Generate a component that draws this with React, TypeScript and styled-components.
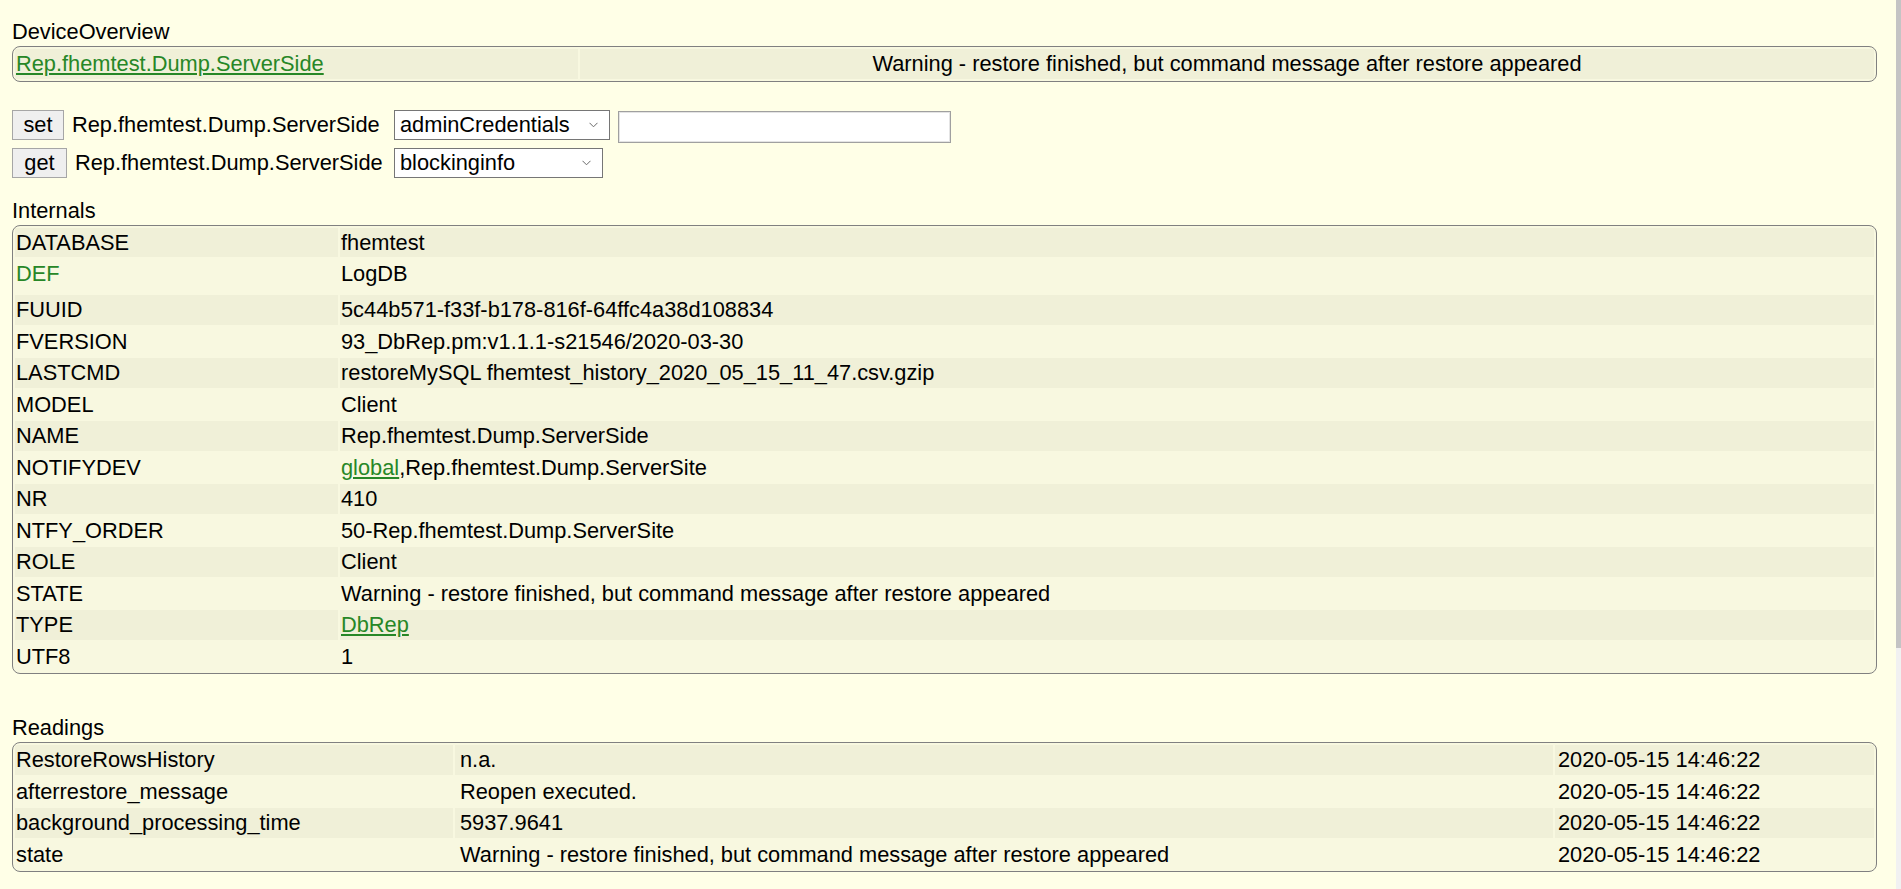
import React from "react";
import styled, { createGlobalStyle } from "styled-components";

const GlobalStyle = createGlobalStyle`
  body {
    margin: 0;
    background: #ffffe7;
    color: #000;
    font-family: "Liberation Sans", Arial, sans-serif;
    font-size: 21.8px;
  }
`;

const Page = styled.div`
  box-sizing: border-box;
  padding: 19px 24px 0 12px;
`;

/* thin browser scrollbar strip lying over the right edge of the page */
const ScrollStrip = styled.div`
  position: fixed;
  top: 0;
  right: 0;
  width: 5px;
  height: 100vh;
  display: flex;
  flex-direction: column;
  background: #f1f1f1;
`;

const ScrollThumb = styled.div`
  height: 648px;
  background: #c4c4c4;
`;

const Section = styled.section<{ $gap?: number }>`
  margin-top: ${(p) => p.$gap ?? 0}px;
`;

const Title = styled.div`
  line-height: 25px;
  margin-bottom: 2px;
`;

const Block = styled.table`
  width: 100%;
  border-collapse: separate;
  border-spacing: 2px;
  background: #f8f8e0;
  border: 1px solid #808080;
  border-radius: 8px;
  font-size: 21.8px;
`;

const Row = styled.tr<{ $odd: boolean }>`
  background: ${(p) => (p.$odd ? "#f0f0d8" : "transparent")};
`;

const Cell = styled.td<{
  $width?: number;
  $center?: boolean;
  $padLeft?: number;
  $tall?: boolean;
}>`
  padding: 2px 1px ${(p) => (p.$tall ? 6.5 : 2)}px ${(p) => p.$padLeft ?? 1}px;
  line-height: 25.5px;
  vertical-align: top;
  white-space: nowrap;
  text-align: ${(p) => (p.$center ? "center" : "left")};
  ${(p) => (p.$width ? `width: ${p.$width}px;` : "")}
`;

const Link = styled.a`
  color: #278727;
  text-decoration: underline;
  cursor: pointer;
`;

const GreenName = styled.span`
  color: #278727;
  cursor: pointer;
`;

const Commands = styled.div`
  margin-top: 28px;
  display: flex;
  flex-direction: column;
  gap: 5px;
`;

const CommandRow = styled.form`
  display: flex;
  align-items: flex-start;
  height: 33px;
  margin: 0;
`;

const Lead = styled.div`
  flex: 0 0 382px;
  display: flex;
  align-items: flex-start;
  gap: 8px;
`;

const CmdButton = styled.button<{ $width: number }>`
  box-sizing: border-box;
  flex: 0 0 auto;
  width: ${(p) => p.$width}px;
  height: 30px;
  margin: 0;
  padding: 0;
  font-family: "Liberation Sans", Arial, sans-serif;
  font-size: 21.8px;
  color: #000;
  background: #efefef;
  border: 1px solid #a6a6a6;
  border-radius: 0;
`;

const DeviceName = styled.span`
  line-height: 30px;
  white-space: nowrap;
`;

const SelectWrap = styled.div<{ $width: number }>`
  position: relative;
  flex: 0 0 auto;
  width: ${(p) => p.$width}px;
  height: 30px;
  margin-right: 8px;
`;

const Select = styled.select`
  box-sizing: border-box;
  appearance: none;
  width: 100%;
  height: 30px;
  margin: 0;
  padding: 0 24px 0 5px;
  font-family: "Liberation Sans", Arial, sans-serif;
  font-size: 21.8px;
  color: #000;
  background: #fff;
  border: 1px solid #767676;
  border-radius: 0;
`;

const Chevron = styled.svg`
  position: absolute;
  right: 12px;
  top: 12px;
  width: 9px;
  height: 6px;
  pointer-events: none;
`;

const TextInput = styled.input`
  box-sizing: border-box;
  width: 333px;
  height: 32px;
  margin: 1px 0 0 0;
  padding: 0 4px;
  font-family: "Liberation Sans", Arial, sans-serif;
  font-size: 21.8px;
  background: #fff;
  border: 1px solid #a0a0a0;
  box-shadow: inset 0 0 0 1px #e4e4e4;
  border-radius: 0;
`;

type Internal = { name: React.ReactNode; value: React.ReactNode; tall?: boolean };

const internals: Internal[] = [
  { name: "DATABASE", value: "fhemtest" },
  { name: <GreenName>DEF</GreenName>, value: "LogDB", tall: true },
  { name: "FUUID", value: "5c44b571-f33f-b178-816f-64ffc4a38d108834" },
  { name: "FVERSION", value: "93_DbRep.pm:v1.1.1-s21546/2020-03-30" },
  { name: "LASTCMD", value: "restoreMySQL fhemtest_history_2020_05_15_11_47.csv.gzip" },
  { name: "MODEL", value: "Client" },
  { name: "NAME", value: "Rep.fhemtest.Dump.ServerSide" },
  {
    name: "NOTIFYDEV",
    value: (
      <>
        <Link>global</Link>,Rep.fhemtest.Dump.ServerSite
      </>
    ),
  },
  { name: "NR", value: "410" },
  { name: "NTFY_ORDER", value: "50-Rep.fhemtest.Dump.ServerSite" },
  { name: "ROLE", value: "Client" },
  { name: "STATE", value: "Warning - restore finished, but command message after restore appeared" },
  { name: "TYPE", value: <Link>DbRep</Link> },
  { name: "UTF8", value: "1" },
];

const readings = [
  { name: "RestoreRowsHistory", value: "n.a.", time: "2020-05-15 14:46:22" },
  { name: "afterrestore_message", value: "Reopen executed.", time: "2020-05-15 14:46:22" },
  { name: "background_processing_time", value: "5937.9641", time: "2020-05-15 14:46:22" },
  {
    name: "state",
    value: "Warning - restore finished, but command message after restore appeared",
    time: "2020-05-15 14:46:22",
  },
];

function ChevronIcon() {
  return (
    <Chevron viewBox="0 0 9 6">
      <path d="M0.5 0.8 L4.5 4.8 L8.5 0.8" fill="none" stroke="#6a6a6a" strokeWidth="1" />
    </Chevron>
  );
}

export default function App() {
  const device = "Rep.fhemtest.Dump.ServerSide";
  return (
    <>
      <GlobalStyle />
      <Page>
        <Section>
          <Title>DeviceOverview</Title>
          <Block>
            <tbody>
              <Row $odd>
                <Cell $width={561}>
                  <Link>{device}</Link>
                </Cell>
                <Cell $center>
                  Warning - restore finished, but command message after restore appeared
                </Cell>
              </Row>
            </tbody>
          </Block>
        </Section>

        <Commands>
          <CommandRow onSubmit={(e) => e.preventDefault()}>
            <Lead>
              <CmdButton type="button" $width={52}>
                set
              </CmdButton>
              <DeviceName>{device}</DeviceName>
            </Lead>
            <SelectWrap $width={216}>
              <Select defaultValue="adminCredentials">
                <option>adminCredentials</option>
              </Select>
              <ChevronIcon />
            </SelectWrap>
            <TextInput type="text" />
          </CommandRow>
          <CommandRow onSubmit={(e) => e.preventDefault()}>
            <Lead>
              <CmdButton type="button" $width={55}>
                get
              </CmdButton>
              <DeviceName>{device}</DeviceName>
            </Lead>
            <SelectWrap $width={209}>
              <Select defaultValue="blockinginfo">
                <option>blockinginfo</option>
              </Select>
              <ChevronIcon />
            </SelectWrap>
          </CommandRow>
        </Commands>

        <Section $gap={17}>
          <Title>Internals</Title>
          <Block>
            <tbody>
              {internals.map((it, i) => (
                <Row key={i} $odd={i % 2 === 0}>
                  <Cell $width={321} $tall={it.tall}>
                    {it.name}
                  </Cell>
                  <Cell $tall={it.tall}>{it.value}</Cell>
                </Row>
              ))}
            </tbody>
          </Block>
        </Section>

        <Section $gap={41}>
          <Title>Readings</Title>
          <Block>
            <tbody>
              {readings.map((r, i) => (
                <Row key={r.name} $odd={i % 2 === 0}>
                  <Cell $width={436}>{r.name}</Cell>
                  <Cell $padLeft={5}>{r.value}</Cell>
                  <Cell $width={315} $padLeft={3}>
                    {r.time}
                  </Cell>
                </Row>
              ))}
            </tbody>
          </Block>
        </Section>
      </Page>
      <ScrollStrip>
        <ScrollThumb />
      </ScrollStrip>
    </>
  );
}
